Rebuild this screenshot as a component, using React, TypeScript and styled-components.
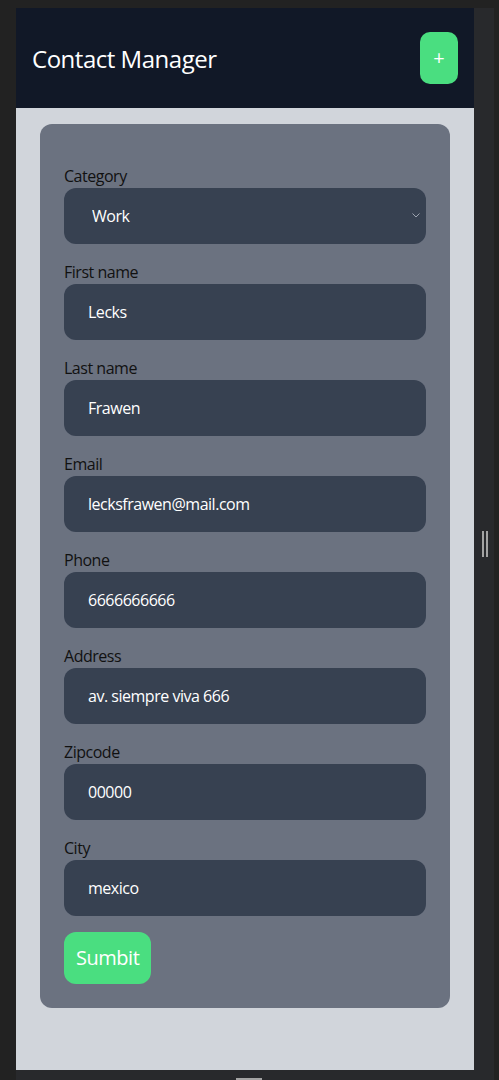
import styled, { createGlobalStyle } from "styled-components";

const GlobalStyle = createGlobalStyle`
  * {
    box-sizing: border-box;
  }
  body {
    margin: 0;
    background: #222222;
    font-family: "Open Sans", "Noto Sans", sans-serif;
    letter-spacing: -0.03em;
  }
`;

const fields = [
  { label: "First name", value: "Lecks" },
  { label: "Last name", value: "Frawen" },
  { label: "Email", value: "lecksfrawen@mail.com" },
  { label: "Phone", value: "6666666666" },
  { label: "Address", value: "av. siempre viva 666" },
  { label: "Zipcode", value: "00000" },
  { label: "City", value: "mexico" },
];

function App() {
  return (
    <Page>
      <GlobalStyle />
      <Screen>
        <Header>
          <Title>Contact Manager</Title>
          <AddBtn type="button">+</AddBtn>
        </Header>
        <Main>
          <Card onSubmit={(e) => e.preventDefault()}>
            <Field>
              <Label>Category</Label>
              <SelectWrap>
                <Select defaultValue="work">
                  <option value="work">Work</option>
                  <option value="family">Family</option>
                  <option value="friends">Friends</option>
                </Select>
                <Chevron width="8" height="5" viewBox="0 0 8 5">
                  <path d="M0.5 0.5 L4 4 L7.5 0.5" fill="none" stroke="#9ca3af" strokeWidth="1" />
                </Chevron>
              </SelectWrap>
            </Field>
            {fields.map((f) => (
              <Field key={f.label}>
                <Label>{f.label}</Label>
                <Input defaultValue={f.value} />
              </Field>
            ))}
            <SubmitBtn type="submit">Sumbit</SubmitBtn>
          </Card>
        </Main>
      </Screen>
      <SideGutter>
        <Grip />
      </SideGutter>
      <BottomBar>
        <BottomGrip />
      </BottomBar>
    </Page>
  );
}

export default App;

const Page = styled.div`
  display: grid;
  grid-template-columns: 16px 458px 20px 1fr;
  grid-template-rows: 8px 1062px 1fr;
  min-height: 1080px;
  background: #222222;
`;

const Screen = styled.div`
  grid-column: 2;
  grid-row: 2;
  display: flex;
  flex-direction: column;
  background: #d1d5db;
  overflow: hidden;
`;

const SideGutter = styled.div`
  grid-column: 3;
  grid-row: 2 / 4;
  background: #28292c;
  display: flex;
  align-items: center;
  justify-content: center;
`;

const Grip = styled.div`
  width: 6px;
  height: 26px;
  border-left: 2px solid #a3a3a3;
  border-right: 2px solid #a3a3a3;
  margin-left: 2px;
`;

const BottomBar = styled.div`
  grid-column: 2 / 4;
  grid-row: 3;
  background: #28292c;
  display: flex;
  justify-content: center;
  padding-top: 8px;
  padding-right: 12px;
`;

const BottomGrip = styled.div`
  width: 26px;
  height: 2px;
  background: #a3a3a3;
`;

const Header = styled.header`
  display: flex;
  justify-content: space-between;
  align-items: center;
  padding: 24px 16px;
  background: #111827;
`;

const Title = styled.h1`
  margin: 0;
  font-size: 24px;
  font-weight: 400;
  color: #ffffff;
`;

const AddBtn = styled.button`
  border: none;
  border-radius: 10px;
  background: #4ade80;
  color: #ffffff;
  font-family: inherit;
  font-size: 20px;
  line-height: 28px;
  padding: 12px;
  width: 38px;
`;

const Main = styled.main`
  flex: 1;
  padding: 16px 24px;
`;

const Card = styled.form`
  display: flex;
  flex-direction: column;
  align-items: flex-start;
  gap: 16px;
  padding: 40px 24px 24px;
  background: #6b7280;
  border-radius: 12px;
`;

const Field = styled.div`
  display: flex;
  flex-direction: column;
  width: 100%;
`;

const Label = styled.label`
  font-size: 16px;
  line-height: 24px;
  color: #111111;
`;

const Input = styled.input`
  height: 56px;
  width: 100%;
  border: none;
  border-radius: 12px;
  background: #374151;
  color: #ffffff;
  font-family: inherit;
  letter-spacing: inherit;
  font-size: 16px;
  padding: 0 24px;
  outline: none;
`;

const SelectWrap = styled.div`
  position: relative;
`;

const Select = styled.select`
  appearance: none;
  height: 56px;
  width: 100%;
  border: none;
  border-radius: 12px;
  background: #374151;
  color: #ffffff;
  font-family: inherit;
  letter-spacing: inherit;
  font-size: 16px;
  padding: 0 28px;
  outline: none;
`;

const Chevron = styled.svg`
  position: absolute;
  right: 6px;
  top: 25px;
  pointer-events: none;
`;

const SubmitBtn = styled.button`
  border: none;
  border-radius: 12px;
  background: #4ade80;
  color: #ffffff;
  font-family: inherit;
  letter-spacing: inherit;
  font-size: 20px;
  line-height: 28px;
  padding: 12px;
`;
